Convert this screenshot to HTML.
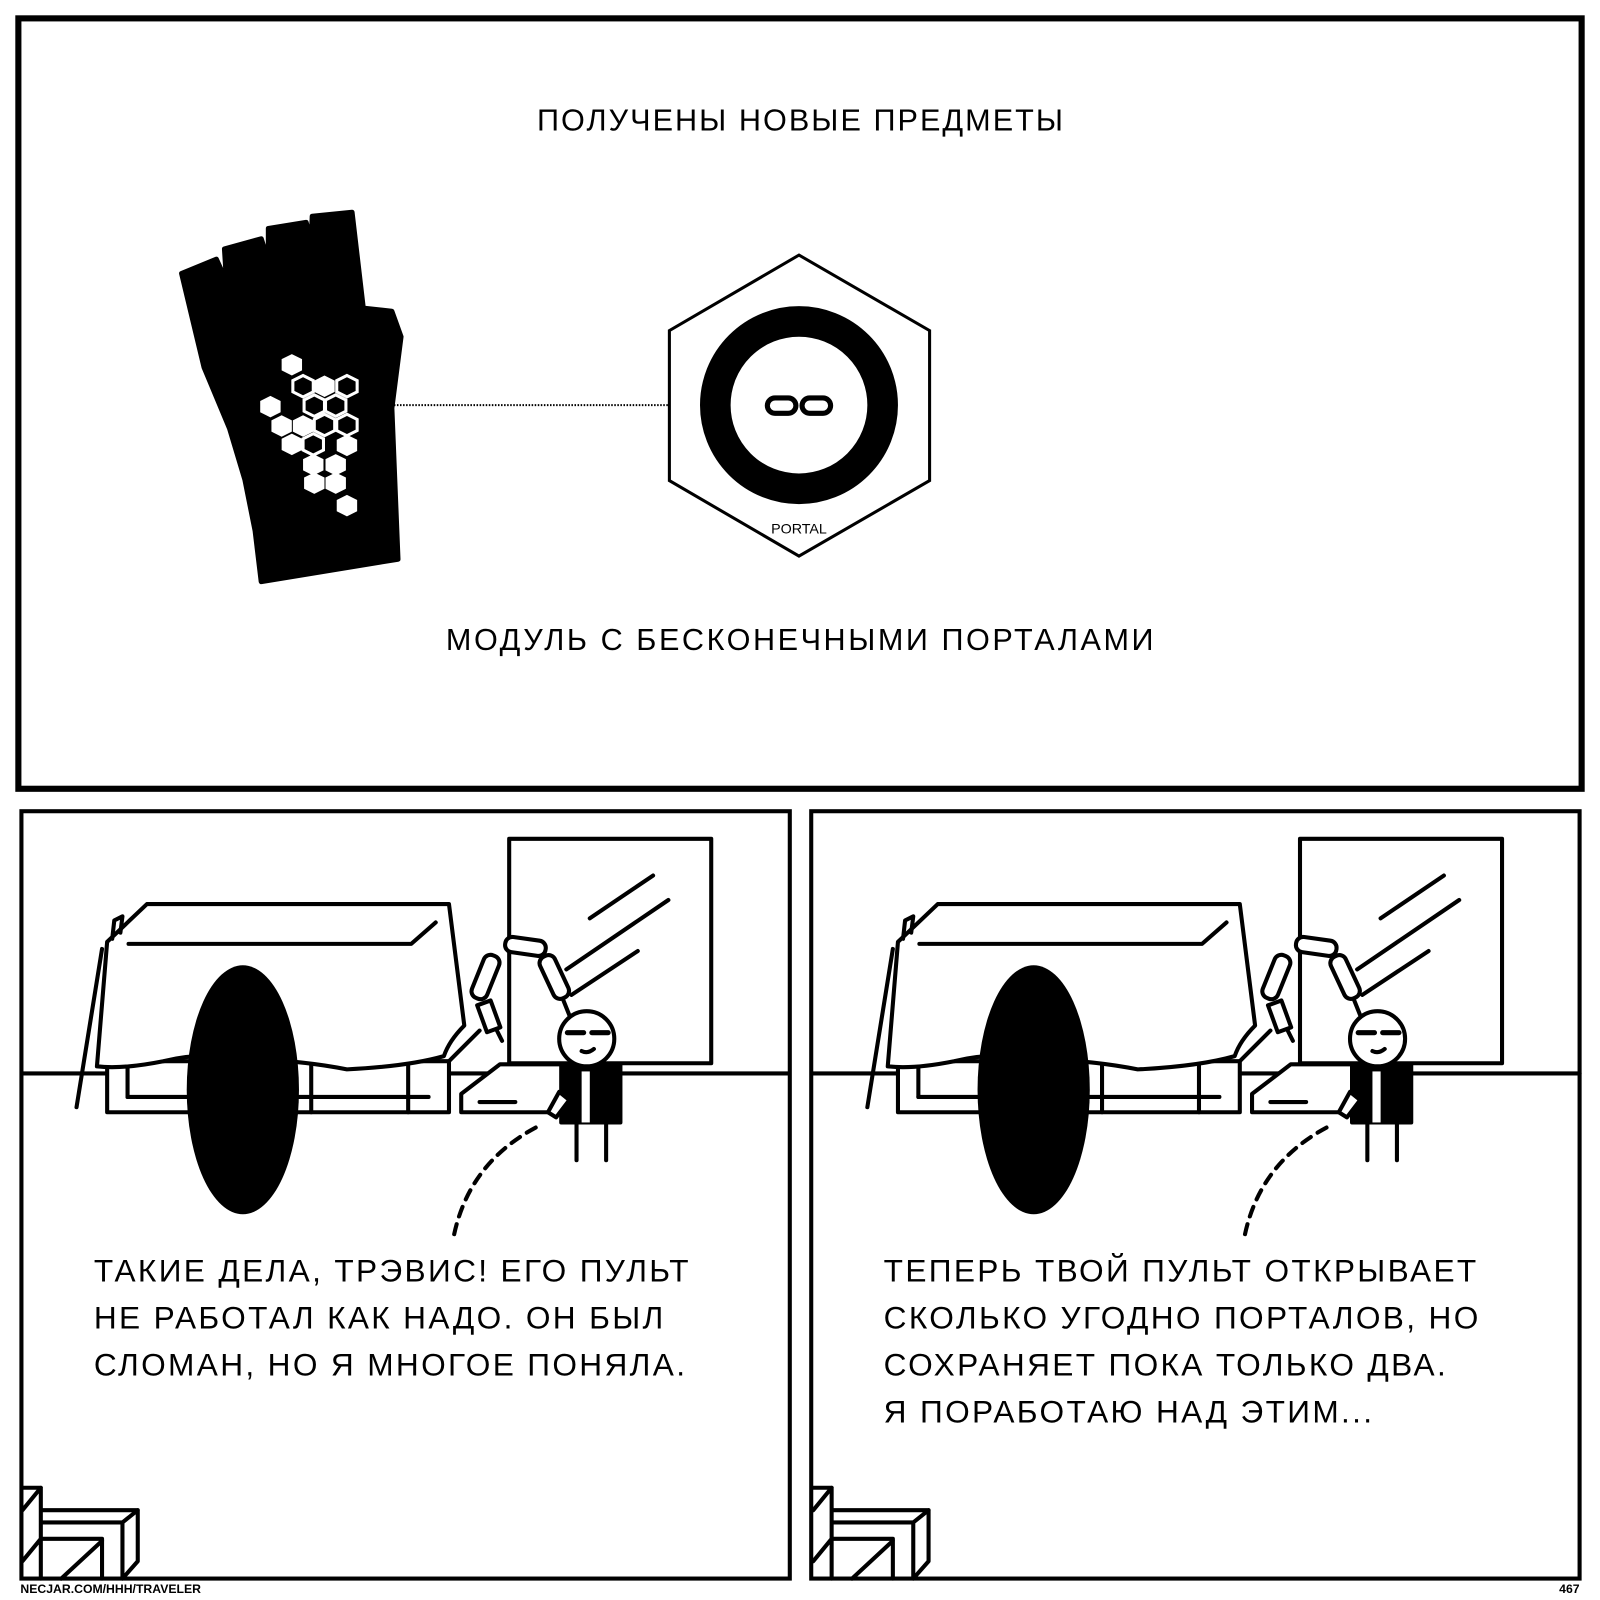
<!DOCTYPE html>
<html><head><meta charset="utf-8"><style>
html,body{margin:0;padding:0;background:#fff;}
svg{display:block;}
text{font-family:"Liberation Sans","DejaVu Sans",sans-serif;fill:#000;}
</style></head><body>
<svg width="1600" height="1600" viewBox="0 0 1568 1568" xmlns="http://www.w3.org/2000/svg">
<rect width="1568" height="1568" fill="#fff"/>
<rect x="18" y="18" width="1532" height="755" fill="none" stroke="#000" stroke-width="6"/>
<text x="785" y="128" font-size="30" text-anchor="middle" letter-spacing="2">ПОЛУЧЕНЫ НОВЫЕ ПРЕДМЕТЫ</text>
<text x="785" y="637" font-size="30" text-anchor="middle" letter-spacing="2.5">МОДУЛЬ С БЕСКОНЕЧНЫМИ ПОРТАЛАМИ</text>
<path d="M178,268 L212,254 L222,276 L220,244 L256,234 L263,256 L263,224 L300,218 L305,236 L306,212 L345,208 L356,302 L384,305 L393,330 L384,400 L390,548 L256,570 L250,520 L240,470 L225,420 L200,360 Z" fill="#000" stroke="#000" stroke-width="5" stroke-linejoin="round"/>
<g fill="#fff">
<polygon points="286,347 296,352 296,363 286,368 276,363 276,352"/>
<polygon points="265,388 275,393 275,404 265,409 255,404 255,393"/>
<polygon points="276,407 286,412 286,423 276,428 266,423 266,412"/>
<polygon points="297,407 307,412 307,423 297,428 287,423 287,412"/>
<polygon points="286,425 296,430 296,441 286,446 276,441 276,430"/>
<polygon points="318,368 328,373 328,384 318,389 308,384 308,373"/>
<polygon points="329,445 339,450 339,461 329,466 319,461 319,450"/>
<polygon points="340,426 350,431 350,442 340,447 330,442 330,431"/>
<polygon points="307,445 317,450 317,461 307,466 297,461 297,450"/>
<polygon points="308,463 318,468 318,479 308,484 298,479 298,468"/>
<polygon points="329,463 339,468 339,479 329,484 319,479 319,468"/>
<polygon points="340,485 350,490 350,501 340,506 330,501 330,490"/>
</g>
<g fill="#000" stroke="#fff" stroke-width="3">
<polygon points="297,368 307,373 307,384 297,389 287,384 287,373"/>
<polygon points="340,368 350,373 350,384 340,389 330,384 330,373"/>
<polygon points="308,387 318,392 318,403 308,408 298,403 298,392"/>
<polygon points="329,387 339,392 339,403 329,408 319,403 319,392"/>
<polygon points="318,406 328,411 328,422 318,427 308,422 308,411"/>
<polygon points="340,406 350,411 350,422 340,427 330,422 330,411"/>
<polygon points="307,425 317,430 317,441 307,446 297,441 297,430"/>
</g>
<line x1="380" y1="397" x2="655" y2="397" stroke="#000" stroke-width="2" stroke-dasharray="1.5 1.5"/>
<polygon points="783,250 911,324 911,471 783,545 656,471 656,324" fill="#fff" stroke="#000" stroke-width="3"/>
<circle cx="783" cy="397" r="82" fill="none" stroke="#000" stroke-width="30"/>
<rect x="752" y="390" width="28" height="15" rx="7.5" fill="none" stroke="#000" stroke-width="5"/>
<rect x="786" y="390" width="28" height="15" rx="7.5" fill="none" stroke="#000" stroke-width="5"/>
<text x="783" y="523" font-size="14" text-anchor="middle">PORTAL</text>

<rect x="21" y="795" width="753" height="752" fill="none" stroke="#000" stroke-width="4"/>
<rect x="795" y="795" width="753" height="752" fill="none" stroke="#000" stroke-width="4"/>
<defs>
<g id="scene" fill="none" stroke="#000" stroke-width="4" stroke-linejoin="round" stroke-linecap="round">
<line x1="22" y1="1052" x2="773" y2="1052"/>
<rect x="499" y="822" width="198" height="220" fill="#fff"/>
<line x1="578" y1="900" x2="640" y2="858"/>
<line x1="555" y1="950" x2="655" y2="882"/>
<line x1="560" y1="975" x2="625" y2="932"/>
<rect x="105" y="1040" width="335" height="50" fill="#fff"/>
<line x1="125" y1="1040" x2="125" y2="1075"/>
<line x1="125" y1="1075" x2="420" y2="1075"/>
<line x1="305" y1="1040" x2="305" y2="1090"/>
<line x1="400" y1="1040" x2="400" y2="1090"/>
<line x1="440" y1="1040" x2="470" y2="1010"/>
<line x1="75" y1="1085" x2="100" y2="930"/>
<path d="M105,923 L144,886 L440,886 L455,1005 Q440,1020 435,1035 Q400,1045 340,1048 Q300,1040 250,1038 Q200,1030 160,1040 Q120,1048 95,1045 Z" fill="#fff"/>
<path d="M110,920 L112,902 L120,898 L118,914"/>
<path d="M126,925 L403,925 L427,904"/>
<rect x="495" y="920" width="40" height="15" rx="7" fill="#fff" transform="rotate(8 515 927)"/>
<rect x="468" y="935" width="16" height="45" rx="7" fill="#fff" transform="rotate(22 476 957)"/>
<rect x="535" y="935" width="16" height="45" rx="7" fill="#fff" transform="rotate(-25 543 957)"/>
<rect x="472" y="982" width="14" height="28" fill="#fff" transform="rotate(-20 479 996)"/>
<line x1="487" y1="1010" x2="492" y2="1020"/>
<path d="M552,980 L560,1000"/>
<path d="M452,1072 L490,1043 L560,1043 L560,1090 L452,1090 Z" fill="#fff"/>
<line x1="470" y1="1080" x2="505" y2="1080"/>
<rect x="550" y="1044" width="58" height="56" fill="#000"/>
<rect x="570" y="1050" width="8" height="50" fill="#fff" stroke="none"/>
<circle cx="575" cy="1018" r="27" fill="#fff"/>
<path d="M556,1012 L572,1012 M580,1012 L596,1012" stroke-width="5"/>
<path d="M570,1030 Q576,1033 582,1028"/>
<path d="M537,1090 L548,1070 L558,1078 L545,1095 Z" fill="#fff"/>
<line x1="565" y1="1100" x2="565" y2="1137"/>
<line x1="594" y1="1100" x2="594" y2="1137"/>
<path d="M525,1105 Q460,1140 445,1210" stroke-dasharray="10 8"/>
<g transform="translate(0,-30)">
<path d="M22,1488 L40,1488 L40,1577 M22,1510 L40,1488 M40,1510 L135,1510 L135,1560 L120,1577 M40,1522 L120,1522 L120,1577 M120,1522 L135,1510 M40,1538 L100,1538 L100,1577 M22,1560 L40,1538 M60,1577 L100,1540"/>
</g>
</g>
</defs>
<use href="#scene"/>
<use href="#scene" transform="translate(775,0)"/>
<ellipse cx="238" cy="1068" rx="55" ry="122" fill="#000"/>
<ellipse cx="1013" cy="1068" rx="55" ry="122" fill="#000"/>
<g font-size="31" letter-spacing="2.3">
<text x="92" y="1256">ТАКИЕ ДЕЛА, ТРЭВИС! ЕГО ПУЛЬТ</text>
<text x="92" y="1302">НЕ РАБОТАЛ КАК НАДО. ОН БЫЛ</text>
<text x="92" y="1348">СЛОМАН, НО Я МНОГОЕ ПОНЯЛА.</text>
<text x="866" y="1256">ТЕПЕРЬ ТВОЙ ПУЛЬТ ОТКРЫВАЕТ</text>
<text x="866" y="1302">СКОЛЬКО УГОДНО ПОРТАЛОВ, НО</text>
<text x="866" y="1348">СОХРАНЯЕТ ПОКА ТОЛЬКО ДВА.</text>
<text x="866" y="1394">Я ПОРАБОТАЮ НАД ЭТИМ...</text>
</g>
<text x="20" y="1561" font-size="12" font-weight="bold">NECJAR.COM/HHH/TRAVELER</text>
<text x="1548" y="1561" font-size="12" font-weight="bold" text-anchor="end">467</text>
</svg>
</body></html>
